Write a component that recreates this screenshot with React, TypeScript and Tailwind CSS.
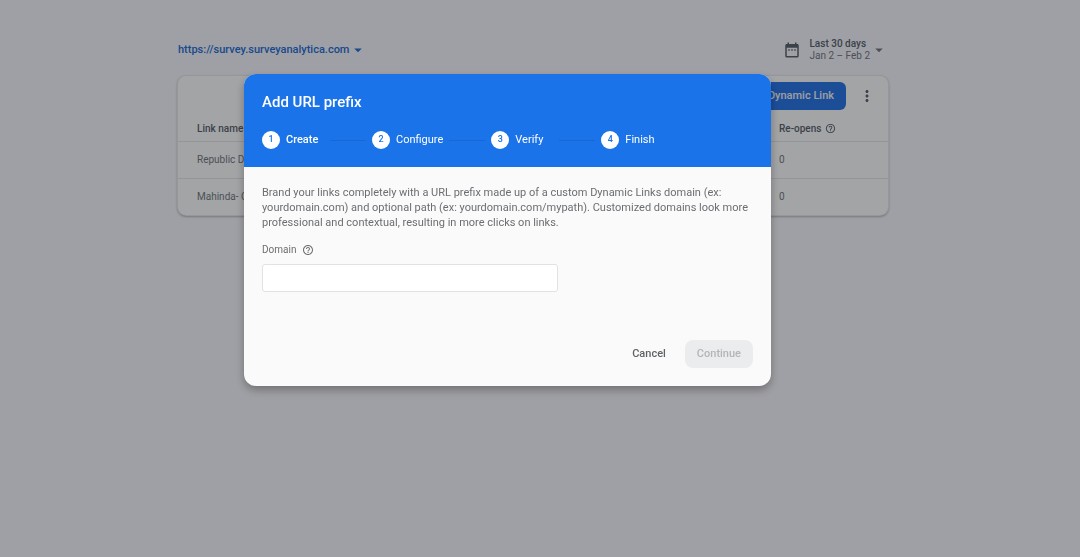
import clsx from "clsx";
import {
  MdArrowDropDown,
  MdDateRange,
  MdHelpOutline,
  MdMoreVert,
} from "react-icons/md";

const LINKS = [
  { name: "Republic Day", reopens: 0 },
  { name: "Mahinda- CV", reopens: 0 },
];

const STEPS = ["Create", "Configure", "Verify", "Finish"];

function LinksPage() {
  return (
    <main className="mx-auto max-w-[724px] pt-9 pr-3.5 text-[10px] text-[#747b86]">
      <header className="flex h-7 items-center justify-between">
        <button className="flex items-center text-[11px] font-medium text-[#2870d8]">
          https://survey.surveyanalytica.com
          <MdArrowDropDown className="size-[18px]" />
        </button>
        <button className="flex items-center text-left">
          <MdDateRange className="mr-2 size-[18px] text-[#5b6572]" />
          <span className="leading-3">
            <span className="block font-medium text-[#5b6572]">Last 30 days</span>
            <span className="block">Jan 2 – Feb 2</span>
          </span>
          <MdArrowDropDown className="size-[18px]" />
        </button>
      </header>

      <section className="mt-3 rounded-lg bg-[#fbfcff] shadow-[0_0_0_1px_#e6e7ee,0_1px_3px_#777]">
        <div className="flex h-10 items-center justify-end gap-3 pr-3">
          <button className="h-7 rounded-md bg-[#2c78ea] px-3 text-[11px] font-medium text-[#f2f4fa]">
            New Dynamic Link
          </button>
          <button aria-label="More options">
            <MdMoreVert className="size-[18px] text-[#5b6572]" />
          </button>
        </div>
        <table className="w-full text-left">
          <thead>
            <tr className="h-[25px] text-[#5b6572]">
              <th className="pl-[19px] font-medium">Link name</th>
              <th className="w-[109px] font-medium">
                <span className="flex items-center gap-1">
                  Re-opens
                  <MdHelpOutline className="size-[11px]" />
                </span>
              </th>
            </tr>
          </thead>
          <tbody>
            {LINKS.map((link) => (
              <tr key={link.name} className="h-[37px] border-t border-[#e4e5eb]">
                <td className="pl-[19px]">{link.name}</td>
                <td>{link.reopens}</td>
              </tr>
            ))}
          </tbody>
        </table>
      </section>
    </main>
  );
}

function Stepper() {
  return (
    <ol className="mt-4 flex items-center gap-1.5 text-[11px]">
      {STEPS.map((step, i) => (
        <li key={step} className="flex items-center gap-1.5">
          <span className="flex size-[18px] items-center justify-center rounded-full bg-white text-[9px] font-medium text-[#1a73e8]">
            {i + 1}
          </span>
          <span className={clsx("min-w-[38px]", i === 0 && "font-medium")}>
            {step}
          </span>
          {i < STEPS.length - 1 && <span className="h-px w-9 bg-[#1967d2]" />}
        </li>
      ))}
    </ol>
  );
}

function AddPrefixDialog() {
  return (
    <div className="fixed inset-0 flex items-start justify-center bg-black/35 pt-[74px] pr-[65px]">
      <div
        role="dialog"
        aria-modal="true"
        aria-labelledby="dialog-title"
        className="w-full max-w-[527px] overflow-hidden rounded-xl bg-[#fafafa] shadow-[0_4px_10px_rgba(0,0,0,0.3)]"
      >
        <div className="bg-[#1a73e8] px-[18px] pt-4 pb-[18px] text-white">
          <h2 id="dialog-title" className="text-[15px] leading-[25px] font-medium">
            Add URL prefix
          </h2>
          <Stepper />
        </div>
        <form className="p-[18px] text-[11px] text-[#6b6e72]">
          <p className="leading-[15px]">
            Brand your links completely with a URL prefix made up of a custom
            Dynamic Links domain (ex: yourdomain.com) and optional path (ex:
            yourdomain.com/mypath). Customized domains look more professional and
            contextual, resulting in more clicks on links.
          </p>
          <label
            htmlFor="domain"
            className="mt-3 flex items-center gap-1.5 text-[10px] leading-4"
          >
            Domain
            <MdHelpOutline className="size-3" />
          </label>
          <input
            id="domain"
            className="mt-1.5 block h-7 w-[296px] rounded-[3px] border border-[#e2e2e2] bg-white px-2 outline-none focus:border-[#1a73e8]"
          />
          <div className="mt-12 flex justify-end gap-[7px] font-medium">
            <button type="button" className="h-7 rounded-lg px-3 text-[#5f6368]">
              Cancel
            </button>
            <button
              type="submit"
              disabled
              className="h-7 rounded-lg bg-[#ebecee] px-3 text-[#b4b5b8]"
            >
              Continue
            </button>
          </div>
        </form>
      </div>
    </div>
  );
}

export default function App() {
  return (
    <div className="min-h-screen bg-[#f5f6fd] font-[Roboto,sans-serif]">
      <LinksPage />
      <AddPrefixDialog />
    </div>
  );
}
